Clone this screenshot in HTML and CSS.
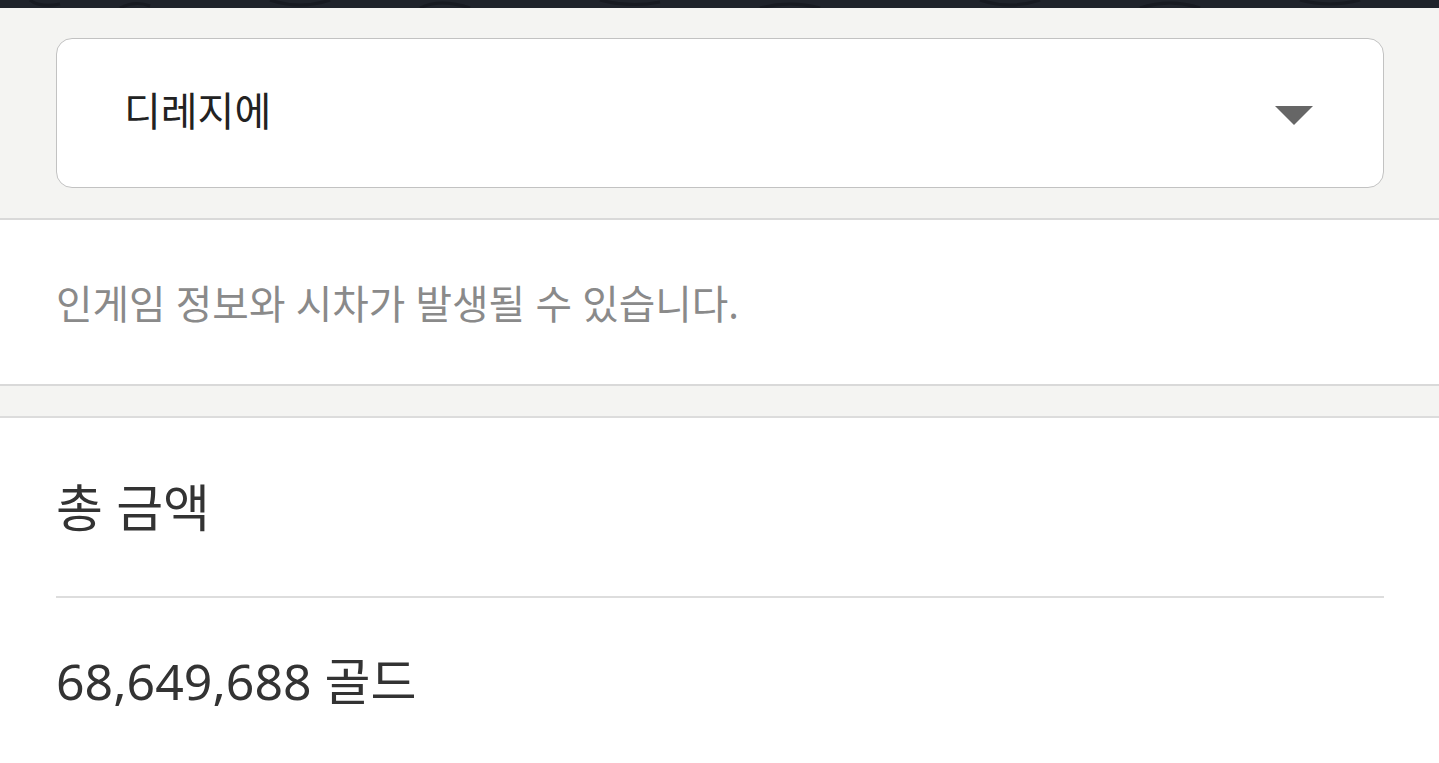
FILE: index.html
```html
<!DOCTYPE html>
<html lang="ko">
<head>
<meta charset="utf-8">
<link rel="stylesheet" href="styles.css">
</head>
<body>
<div class="topbar">
  <svg class="pattern" width="1439" height="8" viewBox="0 0 1439 8" preserveAspectRatio="none">
    <path d="M30 0 Q40 8 60 4 M120 8 Q135 0 150 6 M270 0 Q300 10 330 0 M420 8 Q440 -2 470 8 M600 0 Q630 8 660 2 M760 8 Q790 0 820 8 M980 0 Q1010 10 1040 0 M1140 8 Q1170 -2 1200 8 M1300 0 Q1330 8 1360 0" fill="none" stroke="#171a21" stroke-width="3"/>
  </svg>
</div>
<section class="select-wrap">
  <div class="select">
    <span class="select-text">디레지에</span>
    <span class="caret"></span>
  </div>
</section>
<section class="notice">
  <p>인게임 정보와 시차가 발생될 수 있습니다.</p>
</section>
<div class="gap"></div>
<section class="total">
  <h2 class="total-title">총 금액</h2>
  <div class="total-amount">68,649,688 골드</div>
</section>
</body>
</html>
```
FILE: styles.css
```css
html, body {
  margin: 0;
  padding: 0;
  background: #ffffff;
  font-family: "Noto Sans", "Noto Sans CJK KR", sans-serif;
}
.topbar {
  height: 8px;
  background: #1f232b;
  overflow: hidden;
}
.pattern {
  display: block;
}
.select-wrap {
  background: #f4f4f2;
  padding: 30px 55px 30px 56px;
  border-bottom: 2px solid #d9d9d9;
}
.select {
  height: 150px;
  box-sizing: border-box;
  border: 1px solid #c2c2c2;
  border-radius: 16px;
  background: #fff;
  display: flex;
  align-items: center;
  justify-content: space-between;
  padding: 0 70px 0 67px;
}
.select-text {
  font-size: 40px;
  color: #222;
  margin-top: -8px;
}
.caret {
  width: 0;
  height: 0;
  border-left: 19px solid transparent;
  border-right: 19px solid transparent;
  border-top: 19px solid #666;
  margin-top: 4px;
}
.notice {
  height: 164px;
  display: flex;
  align-items: center;
  padding: 0 56px;
  border-bottom: 2px solid #d9d9d9;
}
.notice p {
  margin: 0;
  font-size: 39.7px;
  color: #8a8a8a;
}
.gap {
  height: 30px;
  background: #f4f4f2;
  border-bottom: 2px solid #dcdcdc;
}
.total {
  padding: 0 55px 0 56px;
}
.total-title {
  margin: 0;
  height: 180px;
  box-sizing: border-box;
  display: flex;
  align-items: center;
  font-size: 51px;
  font-weight: 400;
  color: #333;
  border-bottom: 2px solid #dddddd;
  padding-bottom: 4px;
}
.total-amount {
  height: 160px;
  display: flex;
  align-items: center;
  font-size: 50px;
  color: #333;
}
```
